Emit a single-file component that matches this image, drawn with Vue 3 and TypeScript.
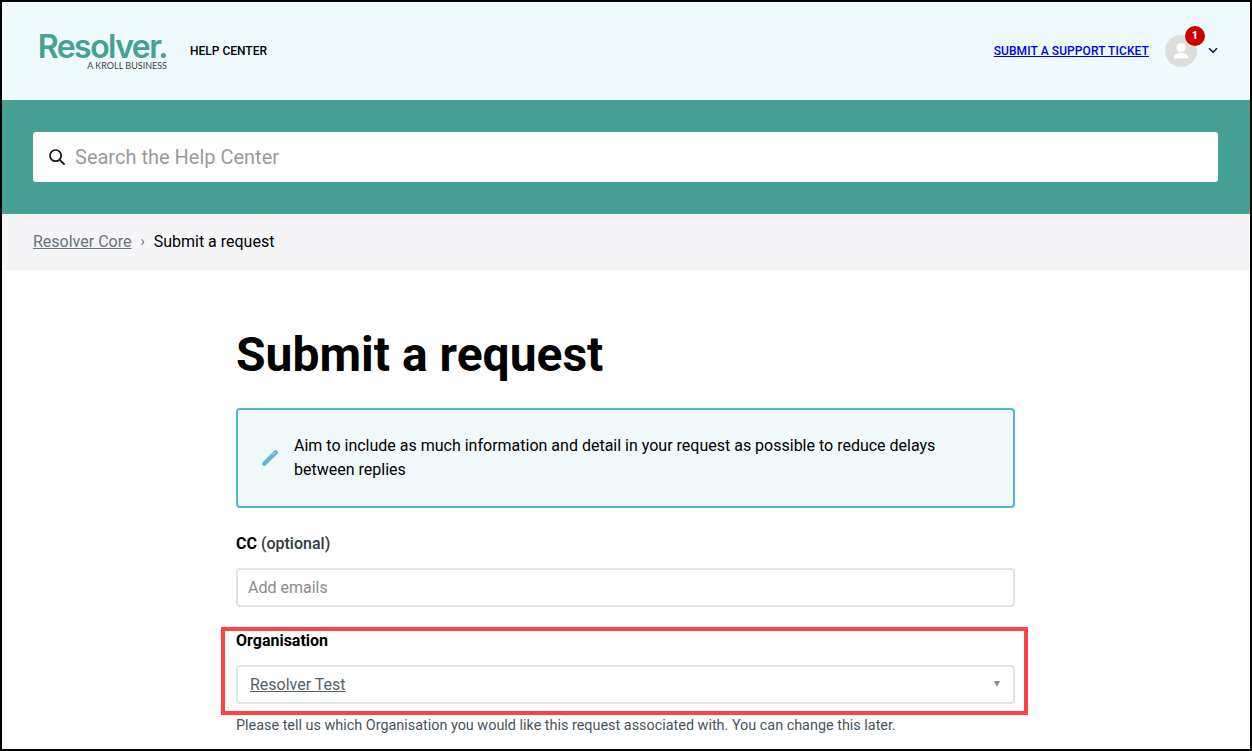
<script setup lang="ts">
const title: string = 'Submit a request'
</script>

<template>
  <div class="frame">
    <header class="top">
      <div class="brand">
        <div class="logo">
          <span class="logo-word">Resolver.</span>
          <span class="logo-sub">A KROLL BUSINESS</span>
        </div>
        <span class="help">HELP CENTER</span>
      </div>
      <div class="actions">
        <a class="ticket" href="#">SUBMIT A SUPPORT TICKET</a>
        <div class="avatar">
          <svg width="32" height="32" viewBox="0 0 32 32">
            <circle cx="16" cy="12.5" r="4.6" fill="#fff" />
            <path d="M8.5 23.5c0-3.6 3.4-5.4 7.5-5.4s7.5 1.8 7.5 5.4z" fill="#fff" />
          </svg>
          <span class="badge">1</span>
        </div>
        <svg class="chev" width="10" height="7" viewBox="0 0 10 7">
          <path d="M1 1.2l4 4 4-4" fill="none" stroke="#04223a" stroke-width="1.6" />
        </svg>
      </div>
    </header>

    <section class="band">
      <div class="search">
        <svg width="18" height="18" viewBox="0 0 18 18">
          <circle cx="7.6" cy="7.6" r="5.6" fill="none" stroke="#111" stroke-width="1.7" />
          <path d="M11.8 11.8l4.8 4.8" stroke="#111" stroke-width="1.8" fill="none" />
        </svg>
        <span class="placeholder">Search the Help Center</span>
      </div>
    </section>

    <nav class="crumbs">
      <a href="#">Resolver Core</a>
      <span class="sep">›</span>
      <span class="current">{{ title }}</span>
    </nav>

    <main class="content">
      <h1>{{ title }}</h1>
      <div class="callout">
        <svg class="pencil" width="18" height="18" viewBox="0 0 18 18">
          <path d="M3.2 14.8L14.8 3.4" fill="none" stroke="#5bb9d6" stroke-width="4.4" stroke-linecap="round" />
          <path d="M11.6 5.6l2.2-2.2" fill="none" stroke="#f1f9fb" stroke-width="1" />
        </svg>
        <p>Aim to include as much information and detail in your request as possible to reduce delays between replies</p>
      </div>

      <label class="label cc">CC <span>(optional)</span></label>
      <div class="input muted">Add emails</div>

      <label class="label org">Organisation</label>
      <div class="input select">
        <a href="#">Resolver Test</a>
        <span class="caret"></span>
      </div>
      <p class="hint">Please tell us which Organisation you would like this request associated with. You can change this later.</p>
    </main>

    <div class="highlight"></div>
  </div>
</template>

<style scoped>
.frame {
  position: relative;
  box-sizing: border-box;
  width: 1252px;
  height: 751px;
  overflow: hidden;
  border: 2px solid #000;
  background: #fff;
  font-family: Roboto, "Liberation Sans", sans-serif;
  color: #000;
}
.top {
  box-sizing: border-box;
  height: 98px;
  padding: 0 32px 0 36px;
  background: #eefafc;
  display: flex;
  align-items: center;
  justify-content: space-between;
}
.brand {
  display: flex;
  align-items: center;
  gap: 22px;
}
.logo {
  box-sizing: border-box;
  display: flex;
  flex-direction: column;
  align-items: flex-end;
  width: 130px;
  padding-right: 1px;
  margin-top: 2px;
}
.logo-word {
  font-family: Inter, sans-serif;
  font-size: 32px;
  font-weight: 600;
  letter-spacing: -1.55px;
  line-height: 27px;
  color: #46a093;
}
.logo-sub {
  margin-top: 1px;
  font-family: Lato, sans-serif;
  font-size: 9px;
  line-height: 10px;
  font-weight: 400;
  color: #444;
}
.help {
  font-size: 12px;
  font-weight: 500;
  margin-top: -1px;
}
.actions {
  display: flex;
  align-items: center;
}
.ticket {
  font-size: 12px;
  font-weight: 500;
  letter-spacing: 0.09px;
  color: #00e;
  margin-right: 16px;
}
.avatar {
  position: relative;
  width: 32px;
  height: 32px;
  border-radius: 50%;
  background: #ddd;
  margin-right: 11px;
}
.avatar svg {
  display: block;
}
.badge {
  position: absolute;
  left: 20px;
  top: -9px;
  width: 20px;
  height: 20px;
  border-radius: 50%;
  background: #c80000;
  color: #fff;
  font-size: 11px;
  font-weight: 700;
  line-height: 20px;
  text-align: center;
}
.chev {
  display: block;
  margin-top: -2px;
}
.band {
  height: 114px;
  box-sizing: border-box;
  padding: 32px 32px 0 31px;
  background: #46a093;
}
.search {
  height: 50px;
  border-radius: 3px;
  background: #fff;
  display: flex;
  align-items: center;
  padding-left: 15px;
  gap: 9px;
}
.placeholder {
  font-size: 20px;
  color: #9a9a9a;
}
.crumbs {
  box-sizing: border-box;
  height: 56px;
  padding: 0 0 2px 31px;
  background: #f5f5f7;
  display: flex;
  align-items: center;
  font-size: 16px;
}
.crumbs a {
  color: #68737d;
}
.sep {
  color: #68737d;
  margin: 0 9px;
  font-size: 14px;
}
.content {
  width: 779px;
  margin-left: 234px;
}
h1 {
  margin: 56px 0 0;
  font-size: 48px;
  line-height: 58px;
  font-weight: 700;
}
.callout {
  box-sizing: border-box;
  margin-top: 24px;
  height: 100px;
  border: 2px solid #4fb5d0;
  border-radius: 4px;
  background: #f1f9fb;
  display: flex;
  align-items: center;
  padding: 0 56px 0 23px;
  gap: 15px;
}
.pencil {
  flex: none;
}
.callout p {
  margin: 0;
  font-size: 16px;
  line-height: 24px;
}
.label {
  display: block;
  font-size: 16px;
  font-weight: 700;
  line-height: 20px;
}
.label span {
  font-weight: 500;
  color: #2f3941;
}
.cc {
  margin-top: 26px;
}
.org {
  margin-top: 24px;
}
.input {
  box-sizing: border-box;
  height: 39px;
  border: 2px solid #dfe3e6;
  border-radius: 4px;
  display: flex;
  align-items: center;
  font-size: 16px;
}
.cc + .input {
  margin-top: 14px;
  padding-left: 10px;
}
.muted {
  color: #8c8c8c;
}
.select {
  margin-top: 14px;
  padding: 0 13px 2px 12px;
  justify-content: space-between;
}
.select a {
  color: #555f68;
  margin-top: 2px;
}
.caret {
  width: 0;
  height: 0;
  border-left: 3px solid transparent;
  border-right: 3px solid transparent;
  border-top: 6px solid #8a8f94;
}
.hint {
  margin: 12px 0 0;
  font-size: 14.4px;
  line-height: 20px;
  color: #49545c;
}
.highlight {
  position: absolute;
  left: 219px;
  top: 625px;
  width: 807px;
  height: 88px;
  box-sizing: border-box;
  border: 4px solid #ff4242;
  pointer-events: none;
}
</style>

<style>
html, body { margin: 0; overflow: hidden; }
</style>
